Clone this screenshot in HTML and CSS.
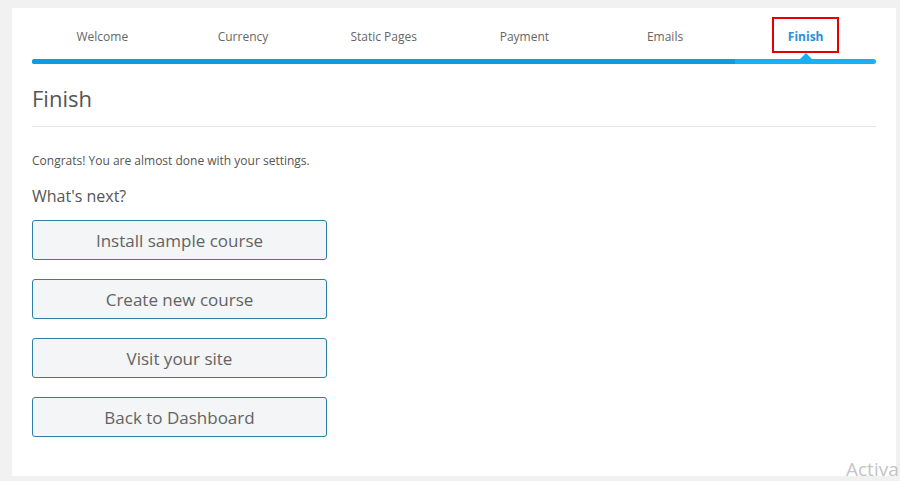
FILE: index.html
```html
<!DOCTYPE html>
<html>
  <head>
    <title>Setup Wizard - Finish</title>
    <link rel="stylesheet" href="styles.css">
  </head>
  <body>
    <div id="panel">
      <div id="steps">
        <div class="step">Welcome</div>
        <div class="step">Currency</div>
        <div class="step">Static Pages</div>
        <div class="step">Payment</div>
        <div class="step">Emails</div>
        <div class="step active"><span class="label">Finish</span></div>
      </div>
      <div id="progress">
        <div class="done"></div>
      </div>

      <h1>Finish</h1>
      <p class="intro">Congrats! You are almost done with your settings.</p>
      <h2>What's next?</h2>
      <div id="actions">
        <a class="button" href="#">Install sample course</a>
        <a class="button" href="#">Create new course</a>
        <a class="button" href="#">Visit your site</a>
        <a class="button" href="#">Back to Dashboard</a>
      </div>
    </div>
    <div id="watermark">Activa</div>
  </body>
</html>
```

FILE: styles.css
```css
html, body {
  margin: 0;
  height: 100%;
  overflow: hidden;
}

body {
  background-color: #F1F1F1;
  font-family: "Open Sans", "Noto Sans", sans-serif;
  color: #555;
  padding: 8px 4px 5px 12px;
  box-sizing: border-box;
  position: relative;
}

#panel {
  background-color: #FFFFFF;
  height: 468px;
  padding: 0 20px;
  box-sizing: border-box;
}

#steps {
  display: flex;
  padding-top: 9px;
}

.step {
  flex: 1;
  height: 36px;
  box-sizing: border-box;
  padding-top: 3px;
  display: flex;
  align-items: center;
  justify-content: center;
  font-size: 12px;
  color: #666;
}

.step.active {
  position: relative;
  padding-top: 0;
}

.step.active .label {
  height: 36px;
  width: 67px;
  box-sizing: border-box;
  padding-top: 3px;
  display: flex;
  align-items: center;
  justify-content: center;
  border: 2px solid #E40000;
  color: #2B8FD8;
  font-weight: bold;
}

.step.active::after {
  content: "";
  position: absolute;
  left: 50%;
  bottom: -6px;
  margin-left: -6px;
  border-left: 6px solid transparent;
  border-right: 6px solid transparent;
  border-bottom: 6px solid #1AAFF3;
}

#progress {
  margin-top: 6px;
  height: 5px;
  border-radius: 3px;
  background-color: #1AAFF3;
  overflow: hidden;
}

#progress .done {
  width: 83.33%;
  height: 100%;
  background-color: #0F9BDF;
}

h1 {
  margin: 0;
  padding: 19px 0 13px;
  font-size: 22px;
  font-weight: normal;
  color: #555;
  border-bottom: 1px solid #E8E8E8;
}

p.intro {
  margin: 25px 0 0;
  font-size: 12px;
  line-height: 18px;
}

h2 {
  margin: 15px 0 0;
  font-size: 16px;
  font-weight: normal;
  line-height: 22px;
}

#actions {
  display: flex;
  flex-direction: column;
  align-items: flex-start;
  gap: 19px;
  margin-top: 13px;
}

.button {
  width: 295px;
  height: 40px;
  box-sizing: border-box;
  display: flex;
  align-items: center;
  justify-content: center;
  border: 1px solid #2C7FA3;
  border-radius: 3px;
  background-color: #F3F5F6;
  color: #636363;
  font-size: 17px;
  text-decoration: none;
}

#watermark {
  position: absolute;
  left: 846px;
  top: 456px;
  font-size: 19px;
  color: #C4C4C4;
  white-space: nowrap;
}
```
